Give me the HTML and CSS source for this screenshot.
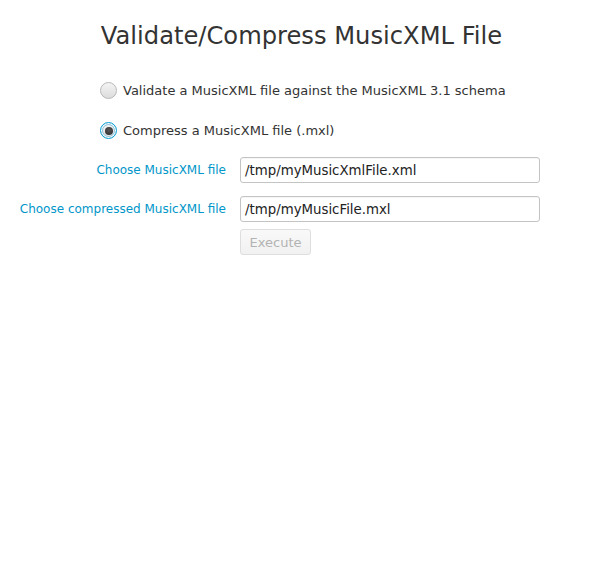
FILE: index.html
```html
<!DOCTYPE html>
<html>
<head>
<meta charset="utf-8">
<link rel="stylesheet" href="styles.css">
</head>
<body>
<div class="app">
  <h1 class="title">Validate/Compress MusicXML File</h1>
  <div class="options">
    <label class="option">
      <span class="radio"></span>
      <span class="option-text">Validate a MusicXML file against the MusicXML 3.1 schema</span>
    </label>
    <label class="option">
      <span class="radio radio-selected"><span class="dot"></span></span>
      <span class="option-text">Compress a MusicXML file (.mxl)</span>
    </label>
  </div>
  <div class="form">
    <a class="link">Choose MusicXML file</a>
    <div class="field">/tmp/myMusicXmlFile.xml</div>
    <a class="link">Choose compressed MusicXML file</a>
    <div class="field">/tmp/myMusicFile.mxl</div>
    <div class="spacer"></div>
    <div class="actions"><button class="btn" disabled>Execute</button></div>
  </div>
</div>
</body>
</html>
```
FILE: styles.css
```css
html, body {
  margin: 0;
  padding: 0;
  background: #ffffff;
}
body {
  font-family: "DejaVu Sans", sans-serif;
  font-size: 13px;
  color: #333333;
}
.app {
  display: flex;
  flex-direction: column;
  padding-top: 21px;
}
.title {
  margin: 0;
  font-size: 24.2px;
  font-weight: normal;
  line-height: 30px;
  text-align: center;
  color: #333333;
  padding-left: 3px;
}
.options {
  display: flex;
  flex-direction: column;
  gap: 23px;
  padding-left: 100px;
  margin-top: 31px;
}
.option {
  display: flex;
  align-items: center;
  gap: 6px;
  height: 17px;
}
.radio {
  width: 17px;
  height: 17px;
  box-sizing: border-box;
  border-radius: 50%;
  border: 1px solid #b8b8b8;
  background: linear-gradient(#f4f4f4, #dcdcdc);
  display: flex;
  align-items: center;
  justify-content: center;
}
.radio-selected {
  border: 1px solid #039ed3;
  box-shadow: inset 0 0 0 1px #ffffff, inset 0 0 0 2px #8fc3d9;
  background: linear-gradient(#f6f6f6, #dedede);
}
.dot {
  width: 8px;
  height: 8px;
  border-radius: 50%;
  background: radial-gradient(circle at 50% 40%, #555555, #2b2b2b);
}
.option-text {
  line-height: 17px;
}
.form {
  display: grid;
  grid-template-columns: 226px 300px;
  column-gap: 14px;
  grid-template-rows: 26px 26px 26px;
  row-gap: 13px;
  margin-top: 18px;
}
.link {
  justify-self: end;
  align-self: center;
  font-size: 12px;
  color: #0096c9;
  cursor: pointer;
}
.field {
  box-sizing: border-box;
  height: 26px;
  border: 1px solid #c4c4c4;
  border-radius: 3px;
  background: #ffffff;
  box-shadow: inset 0 1px 1px rgba(0,0,0,0.04);
  padding: 0 4px;
  font-size: 13.33px;
  display: flex;
  align-items: center;
  color: #222222;
}
.spacer {
  margin-top: -6px;
}
.actions {
  margin-top: -6px;
}
.btn {
  font-family: "DejaVu Sans", sans-serif;
  font-size: 13px;
  height: 26px;
  width: 71px;
  padding: 0;
  border: 1px solid #dedede;
  border-radius: 3px;
  background: linear-gradient(#f9f9f9, #f1f1f1);
  color: #b3b3b3;
}
```
